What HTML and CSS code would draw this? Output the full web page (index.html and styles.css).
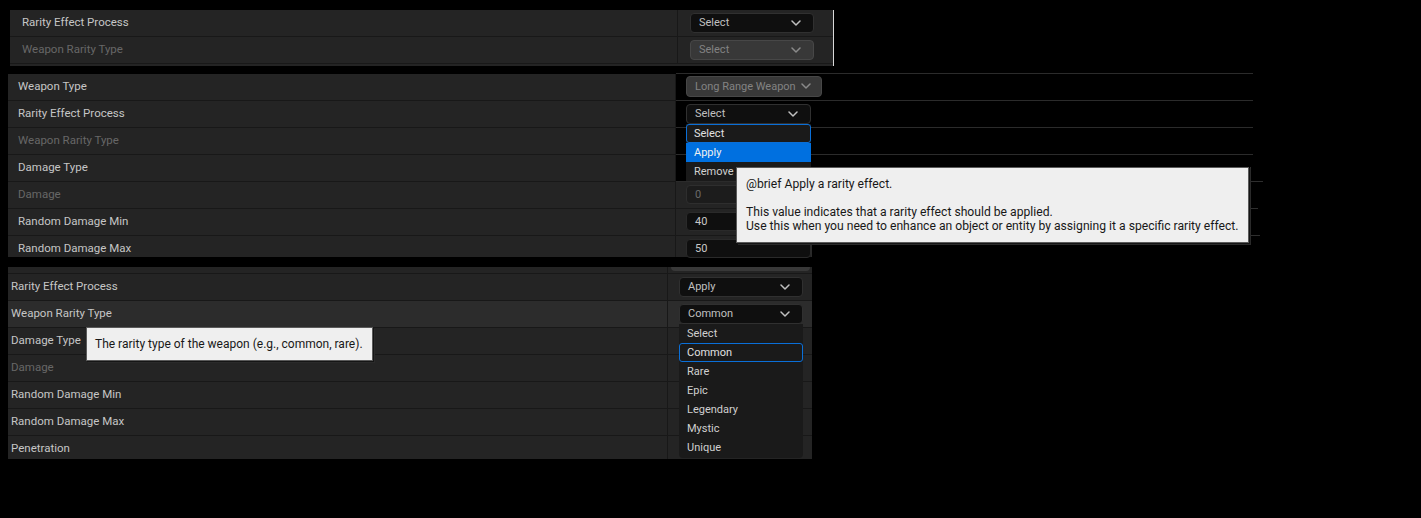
FILE: index.html
```html
<!DOCTYPE html>
<html>
<head>
<meta charset="utf-8">
<link rel="stylesheet" href="styles.css">
</head>
<body>
<div class="canvas">

  <section class="panel p1">
    <div class="row">
      <div class="label">Rarity Effect Process</div>
      <div class="value">
        <div class="combo"><span>Select</span><svg class="chev" viewBox="0 0 10 6"><path d="M1 1 L5 5 L9 1"/></svg></div>
      </div>
    </div>
    <div class="row">
      <div class="label dim">Weapon Rarity Type</div>
      <div class="value">
        <div class="combo disabled"><span>Select</span><svg class="chev" viewBox="0 0 10 6"><path d="M1 1 L5 5 L9 1"/></svg></div>
      </div>
    </div>
  </section>

  <section class="panel p2">
    <div class="row">
      <div class="label">Weapon Type</div>
      <div class="value open first">
        <div class="combo disabled auto"><span>Long Range Weapon</span><svg class="chev" viewBox="0 0 10 6"><path d="M1 1 L5 5 L9 1"/></svg></div>
      </div>
    </div>
    <div class="row">
      <div class="label">Rarity Effect Process</div>
      <div class="value open">
        <div class="combo w125"><span>Select</span><svg class="chev" viewBox="0 0 10 6"><path d="M1 1 L5 5 L9 1"/></svg>
          <ul class="menu">
            <li class="focus">Select</li>
            <li class="hot">Apply</li>
            <li>Remove</li>
          </ul>
        </div>
      </div>
    </div>
    <div class="row">
      <div class="label dim">Weapon Rarity Type</div>
      <div class="value open"></div>
    </div>
    <div class="row">
      <div class="label">Damage Type</div>
      <div class="value open long"></div>
    </div>
    <div class="row">
      <div class="label dim">Damage</div>
      <div class="value short"><div class="num disabled">0</div></div>
    </div>
    <div class="row">
      <div class="label">Random Damage Min</div>
      <div class="value short"><div class="num">40</div></div>
    </div>
    <div class="row last">
      <div class="label">Random Damage Max</div>
      <div class="value short"><div class="num">50</div></div>
    </div>
  </section>

  <section class="panel p3">
    <div class="row stub">
      <div class="label"></div>
      <div class="value"><div class="stubfield"></div></div>
    </div>
    <div class="row">
      <div class="label">Rarity Effect Process</div>
      <div class="value">
        <div class="combo"><span>Apply</span><svg class="chev" viewBox="0 0 10 6"><path d="M1 1 L5 5 L9 1"/></svg></div>
      </div>
    </div>
    <div class="row hover">
      <div class="label">Weapon Rarity Type</div>
      <div class="value">
        <div class="combo"><span>Common</span><svg class="chev" viewBox="0 0 10 6"><path d="M1 1 L5 5 L9 1"/></svg>
          <ul class="menu long">
            <li>Select</li>
            <li class="focus">Common</li>
            <li>Rare</li>
            <li>Epic</li>
            <li>Legendary</li>
            <li>Mystic</li>
            <li>Unique</li>
          </ul>
        </div>
      </div>
    </div>
    <div class="row">
      <div class="label">Damage Type</div>
      <div class="value"></div>
    </div>
    <div class="row">
      <div class="label dim">Damage</div>
      <div class="value"></div>
    </div>
    <div class="row">
      <div class="label">Random Damage Min</div>
      <div class="value"></div>
    </div>
    <div class="row">
      <div class="label">Random Damage Max</div>
      <div class="value"></div>
    </div>
    <div class="row last">
      <div class="label">Penetration</div>
      <div class="value"></div>
    </div>
  </section>

  <div class="tooltip tip1">
    <p>@brief Apply a rarity effect.</p>
    <p class="gap">This value indicates that a rarity effect should be applied.<br>Use this when you need to enhance an object or entity by assigning it a specific rarity effect.</p>
  </div>
  <div class="edge">
    <i class="t1"></i><i class="t2"></i><i class="t3"></i>
  </div>

  <div class="tooltip tip2">
    <p>The rarity type of the weapon (e.g., common, rare).</p>
  </div>

</div>
</body>
</html>
```

FILE: styles.css
```css
* { box-sizing: border-box; }

html, body {
  margin: 0;
  padding: 0;
  background: #000;
}

body {
  font-family: Roboto, "Noto Sans", "Liberation Sans", sans-serif;
  font-size: 11px;
  color: #c0c0c0;
}

.canvas {
  position: relative;
  width: 1421px;
  height: 518px;
  overflow: hidden;
  display: flex;
  flex-direction: column;
  align-items: flex-start;
}

/* ---------- panels ---------- */
.panel {
  display: flex;
  flex-direction: column;
}

.row {
  display: flex;
  height: 27px;
}

.label {
  display: flex;
  align-items: center;
  background: #242424;
  border-bottom: 1px solid #181818;
  border-right: 1px solid #181818;
  white-space: nowrap;
  line-height: 1;
  font-size: 11.5px;
  color: #c6c6c6;
  padding-bottom: 1px;
}

.label.dim { color: #676767; }

.value {
  display: flex;
  align-items: flex-start;
  background: #242424;
  border-bottom: 1px solid #181818;
  flex: 1;
}

/* panel 1 */
.p1 {
  margin: 10px 0 0 10px;
  width: 824px;
  height: 56px;
  background: #242424;
  border-right: 1px solid #d8d8d8;
}
.p1 .label { width: 668px; padding-left: 12px; }
.p1 .value { padding: 3px 0 0 12px; }

/* panel 2 */
.p2 {
  margin: 8px 0 0 8px;
  width: 1245px;
}
.p2 .label { width: 668px; padding-left: 10px; }
.p2 .value { padding: 3px 0 0 10px; }
.p2 .value.open {
  background: transparent;
  border-bottom: 1px solid #2b2b2b;
  position: relative;
}
.p2 .value.first { border-top: 1px solid #2b2b2b; margin-top: -1px; height: 28px; padding-top: 2px; }
.p2 .value.long { margin-right: -9px; }
.p2 .value.short {
  flex: 0 0 136px;
  padding-top: 3px;
  border-right: 1px solid #2a2a2a;
}
.p2 .row.last { height: 21px; }
.p2 .row.last .label,
.p2 .row.last .value { border-bottom: none; }
.p2 .row.last .label { padding-top: 4px; padding-bottom: 0; }

/* panel 3 */
.p3 {
  margin: 10px 0 0 8px;
  width: 804px;
}
.p3 .label { width: 660px; padding-left: 3px; }
.p3 .value { padding: 3px 0 0 11px; }
.p3 .row.stub { height: 7px; }
.p3 .row.stub .value { padding: 0 2px 0 3px; }
.stubfield {
  width: 100%;
  height: 4px;
  background: #383838;
  border-radius: 0 0 4px 4px;
}
.p3 .row.hover .label,
.p3 .row.hover .value { background: #2c2c2c; }
.p3 .row.last { height: 23px; }
.p3 .row.last .label,
.p3 .row.last .value { border-bottom: none; }
.p3 .row.last .label { padding-top: 2px; padding-bottom: 0; }

/* ---------- widgets ---------- */
.combo {
  position: relative;
  display: flex;
  align-items: center;
  justify-content: space-between;
  width: 124px;
  height: 20px;
  padding: 0 12px 1px 8px;
  background: #0f0f0f;
  border: 1px solid #303030;
  border-radius: 4px;
  color: #c0c0c0;
  white-space: nowrap;
}
.combo.w125 { width: 125px; }
.combo.auto {
  width: 136px;
  height: 21px;
  justify-content: flex-start;
  gap: 5px;
}
.combo.disabled {
  background: #383838;
  border-color: #474747;
  color: #838383;
}
.chev {
  width: 10px;
  height: 6px;
  flex: none;
  fill: none;
  stroke: currentColor;
  stroke-width: 1.5;
  stroke-linecap: round;
  stroke-linejoin: round;
}
.combo.disabled .chev { stroke: #8a8a8a; }

.num {
  width: 125px;
  height: 19px;
  padding: 0 8px;
  display: flex;
  align-items: center;
  background: #0f0f0f;
  border: 1px solid #2a2a2a;
  border-radius: 4px;
  color: #c8c8c8;
}
.num.disabled {
  background: #1c1c1c;
  border-color: #2e2e2e;
  color: #6a6a6a;
}

.menu {
  position: absolute;
  left: -1px;
  top: 19px;
  width: calc(100% + 2px);
  margin: 0;
  padding: 0;
  list-style: none;
  background: #1a1a1a;
  z-index: 5;
}
.menu.long { border-radius: 0 0 4px 4px; padding-bottom: 1px; }
.menu li {
  height: 19px;
  display: flex;
  align-items: center;
  padding: 0 8px 1px;
  color: #d0d0d0;
  white-space: nowrap;
}
.menu li.focus {
  border: 1px solid #0a6fd8;
  border-radius: 3px;
  padding-left: 7px;
  color: #e0e0e0;
}
.menu li.hot {
  background: #0070e0;
  color: #f0f0f0;
}

/* ---------- tooltips ---------- */
.tooltip {
  position: absolute;
  background: #efefef;
  border: 1px solid #5a5a5a;
  box-shadow: 1px 1px 0 #151515, 2px 2px 0 #2a2a2a;
  color: #181818;
  font-size: 12px;
  line-height: 14px;
  z-index: 10;
}
.tooltip p { margin: 0; white-space: nowrap; }
.tooltip p.gap { margin-top: 14px; }

.tip1 {
  left: 736px;
  top: 167px;
  width: 513px;
  height: 76px;
  padding: 9px 9px 0 9px;
  font-size: 12.15px;
}
.tip2 {
  left: 86px;
  top: 327px;
  width: 287px;
  height: 34px;
  padding: 9px 9px 0 8px;
}

.edge {
  position: absolute;
  left: 1250px;
  top: 167px;
  width: 1px;
  height: 77px;
  background: #2e2e2e;
}
.edge i {
  position: absolute;
  left: 1px;
  height: 1px;
  background: #2e2e2e;
}
.edge .t1 { top: 14px; width: 12px; }
.edge .t2 { top: 41px; width: 7px; }
.edge .t3 { top: 68px; width: 9px; }
```
